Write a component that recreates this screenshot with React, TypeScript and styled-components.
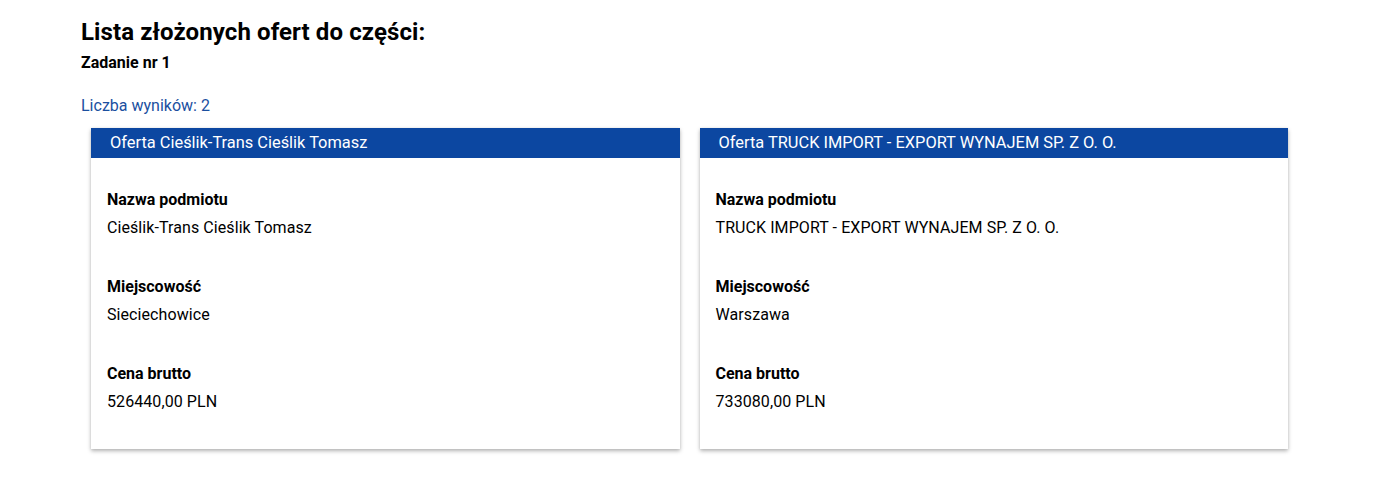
import React from 'react'
import styled, { createGlobalStyle } from 'styled-components'

const GlobalStyle = createGlobalStyle`
  body {
    margin: 0;
    background: #fff;
    font-family: Roboto, 'Noto Sans', Arial, sans-serif;
    color: #000;
  }
`

const Page = styled.div`
  margin-left: 81px;
  width: 1217px;
  padding: 18px 0 40px;
`

const Title = styled.h1`
  margin: 0;
  font-size: 24px;
  line-height: 1.2;
  font-weight: 700;
  letter-spacing: 0.1px;
`

const Subtitle = styled.h2`
  margin: 4px 0 0;
  font-size: 16px;
  line-height: 24px;
  font-weight: 700;
`

const ResultCount = styled.div`
  margin-top: 19px;
  font-size: 16px;
  line-height: 24px;
  color: #1b4f9f;
`

const CardsRow = styled.div`
  display: grid;
  grid-template-columns: 1fr 1fr;
  gap: 20px;
  margin-top: 10px;
  padding: 0 10px;
`

const Card = styled.div`
  background: #fff;
  box-shadow: 0 2px 4px rgba(0, 0, 0, 0.3), 0 0 2px rgba(0, 0, 0, 0.06);
  padding-bottom: 35px;
`

const CardHeader = styled.div`
  background: #0c47a1;
  color: #fff;
  font-size: 16.4px;
  line-height: 24px;
  padding: 3px 19px 3px;
`

const CardBody = styled.div`
  padding: 30px 16px 0;
  display: flex;
  flex-direction: column;
  gap: 35px;
`

const Field = styled.div`
  display: flex;
  flex-direction: column;
  gap: 4px;
`

const FieldLabel = styled.div`
  font-size: 16px;
  line-height: 24px;
  font-weight: 700;
`

const FieldValue = styled.div`
  font-size: 16px;
  line-height: 24px;
  letter-spacing: 0.08px;
`

type Offer = {
  name: string
  city: string
  price: string
}

const offers: Offer[] = [
  { name: 'Cieślik-Trans Cieślik Tomasz', city: 'Sieciechowice', price: '526440,00 PLN' },
  { name: 'TRUCK IMPORT - EXPORT WYNAJEM SP. Z O. O.', city: 'Warszawa', price: '733080,00 PLN' },
]

const OfferCard = ({ offer }: { offer: Offer }) => (
  <Card>
    <CardHeader>Oferta {offer.name}</CardHeader>
    <CardBody>
      <Field>
        <FieldLabel>Nazwa podmiotu</FieldLabel>
        <FieldValue>{offer.name}</FieldValue>
      </Field>
      <Field>
        <FieldLabel>Miejscowość</FieldLabel>
        <FieldValue>{offer.city}</FieldValue>
      </Field>
      <Field>
        <FieldLabel>Cena brutto</FieldLabel>
        <FieldValue>{offer.price}</FieldValue>
      </Field>
    </CardBody>
  </Card>
)

export default function App() {
  return (
    <>
      <GlobalStyle />
      <Page>
        <Title>Lista złożonych ofert do części:</Title>
        <Subtitle>Zadanie nr 1</Subtitle>
        <ResultCount>Liczba wyników: {offers.length}</ResultCount>
        <CardsRow>
          {offers.map((o) => (
            <OfferCard key={o.name} offer={o} />
          ))}
        </CardsRow>
      </Page>
    </>
  )
}
